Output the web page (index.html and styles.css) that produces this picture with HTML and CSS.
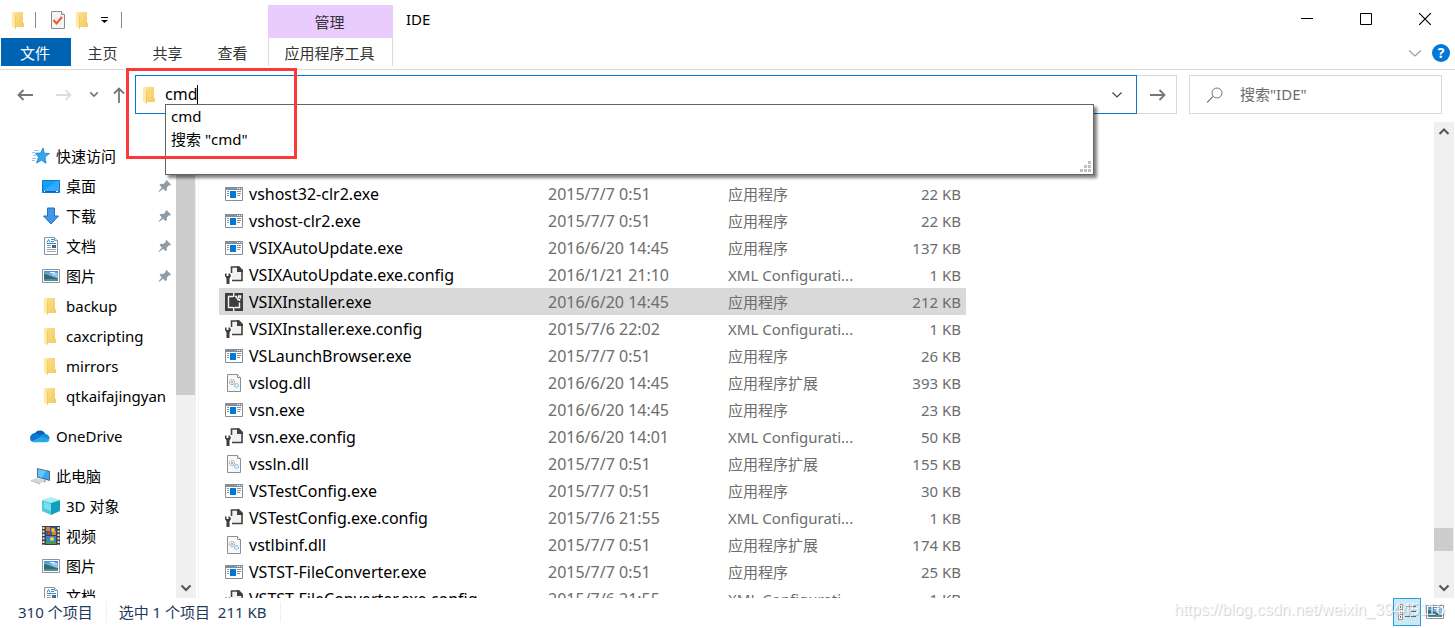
FILE: index.html
```html
<!DOCTYPE html>
<html lang="zh-CN">
<head>
    <meta charset="utf-8">
    <title>IDE</title>
    <meta name="viewport" content="width=device-width, initial-scale=1.0">
    <link rel="stylesheet" href="styles.css">
</head>
<body>
    <!-- icon set -->
    <svg class="sprite" aria-hidden="true">
        <defs>
            <linearGradient id="gFolder" x1="0" y1="0" x2="1" y2="1">
                <stop offset="0" stop-color="#fbe08d"/>
                <stop offset="1" stop-color="#f3cb61"/>
            </linearGradient>
            <linearGradient id="gSky" x1="0" y1="0" x2="0" y2="1">
                <stop offset="0" stop-color="#3f8fe0"/>
                <stop offset="1" stop-color="#d8ecf8"/>
            </linearGradient>
        </defs>
        <symbol id="folder" viewBox="0 0 18 18">
            <path d="M4 1h9v11h1v4H5z" fill="url(#gFolder)"/>
            <path d="M2 1h3l1 2v15l-4-2z" fill="#ffe9a8"/>
            <path d="M5 3l1 1v14l-1-1z" fill="#f3cb61"/>
        </symbol>
        <symbol id="check" viewBox="0 0 18 18">
            <path d="M2.500.5h10l3 3v14h-13z" fill="#f3f4f5" stroke="#8d8d8d"/>
            <path d="M12.500.5v3h3" fill="#fff" stroke="#8d8d8d"/>
            <path d="M4.500 9l3 3.500 5.500-6.500" fill="none" stroke="#f0561d" stroke-width="2"/>
        </symbol>
        <symbol id="star" viewBox="0 0 18 18">
            <path d="M11 1l1.200 5.200 5.300.3-4.500 3.600 1 6.200-4.500-3-5 2.700 2-5.800L3.500 6.300l5.100-.3z" fill="#35a6ee" stroke="#1b7fcb" stroke-width=".8"/>
            <path d="M2 3.500h5M0 5.500h3M1 8.500h3M0 11.500h4M0 13.500h3" stroke="#8ccaf3" stroke-width="1"/>
        </symbol>
        <symbol id="desktop" viewBox="0 0 18 18">
            <path d="M.5 3.500h17v12H.5z" fill="#13a0f8" stroke="#0d79c9"/>
            <path d="M1 14L15 4h2V14z" fill="#33abff"/>
            <path d="M1 14.500h16" stroke="#0a66b1"/>
            <path d="M14 14.500h2M2 14.500h1" stroke="#fff"/>
        </symbol>
        <symbol id="download" viewBox="0 0 18 18">
            <path d="M5.500 1h7v8h4L9 17 1.500 9h4z" fill="#3f97e6" stroke="#2374c0"/>
        </symbol>
        <symbol id="doc" viewBox="0 0 18 18">
            <path d="M2.500.5h10l3 3v14h-13z" fill="#fff" stroke="#8e979e"/>
            <path d="M12.500.5v3h3" fill="#e5e9ec" stroke="#8e979e"/>
            <path d="M5 5.500l1.500-3L8 5.500M9 2.500h3M9 4.500h3M5 6.500h9" stroke="#2e8fd6" fill="none"/>
            <path d="M5 8.500h4M5 10.500h4M5 12.500h9M5 14.500h9" stroke="#9aa4ab"/>
            <path d="M10 8h4v3h-4z" fill="#376c99"/>
        </symbol>
        <symbol id="picture" viewBox="0 0 18 18">
            <path d="M.5 2.500h17v13H.5z" fill="#fff" stroke="#929292"/>
            <path d="M2 4h14v10H2z" fill="url(#gSky)"/>
            <path d="M2 7c4 0 8 3 14 4v1H2z" fill="#356f62"/>
            <path d="M2 12h14v2H2z" fill="#4a8eae"/>
            <path d="M8 5.500h5M10 7h5" stroke="#f5fbff"/>
        </symbol>
        <symbol id="pin" viewBox="0 0 14 14">
            <path d="M8.500 1L13 5.500l-1 1-1-.2-2.300 2.400.3 2.300-1.300 1.300-2.600-2.600L1 13l-.5-.5 3.300-4L1.500 6l1.300-1.200 2.500.2L7.700 2.900l-.3-1z" fill="#8f9ba5"/>
        </symbol>
        <symbol id="cloud" viewBox="0 0 20 14">
            <path d="M5 4a6 6 0 0 1 10.500 1.500L11 10 1 8a4.500 4.500 0 0 1 4-4z" fill="#0364b8"/>
            <path d="M10 6l5-1a4.500 4.500 0 0 1 4.500 5L13 11z" fill="#1490df"/>
            <path d="M4.500 4.500C2 4.500 0 6.500 0 9c0 1.500.8 3 2 3.700L11.500 8 8 5.500a6 6 0 0 0-3.500-1z" fill="#0a78d4"/>
            <path d="M2 12.700L11 7.500l8.500 3c-.3 1.600-1.500 2.800-3.500 2.800H4.500c-1 0-1.800-.1-2.500-.6z" fill="#28a8ea"/>
        </symbol>
        <symbol id="pc" viewBox="0 0 20 18">
            <path d="M7 1l13 3v10L7 10.500z" fill="#4b6f8a"/>
            <path d="M8 2.200l11 2.600v7.800L8 9.700z" fill="#3aa5f0"/>
            <path d="M8 2.200l8 1.900-4 6.600L8 9.700z" fill="#6cc3fa"/>
            <path d="M13 12.200l3 .8-.5 2.500-5-1z" fill="#a9b2b9"/>
            <path d="M1 13l5-2 9 2.500-5 3z" fill="#d3d8dc"/>
            <path d="M1 13l9 3.500v1L1 14z" fill="#a9b2b9"/>
        </symbol>
        <symbol id="cube" viewBox="0 0 18 18">
            <path d="M0 3l9-3 9 3-9 3z" fill="#a5eef4"/>
            <path d="M0 3l9 3v12l-9-4z" fill="#50cbdc"/>
            <path d="M18 3L9 6v12l9-4z" fill="#13a0bf"/>
            <path d="M2 5l7 2.500V14L2 11z" fill="#7be0eb"/>
        </symbol>
        <symbol id="video" viewBox="0 0 18 20">
            <path d="M0 0h18v19H0z" fill="#414141"/>
            <path d="M1.500 1v18M16.500 1v18" stroke="#e4e4e4" stroke-width="2" stroke-dasharray="2 1.500"/>
            <path d="M4 1h10v8H4z" fill="#2e5da8"/>
            <path d="M4 10h10v8H4z" fill="#3a85cf"/>
            <path d="M4 1h4v4H4zM10 5h4v4h-4z" fill="#d9842c"/>
            <circle cx="11" cy="4" r="2" fill="#edc832"/>
            <circle cx="7" cy="7" r="1.500" fill="#cd3830"/>
            <circle cx="10" cy="13" r="2" fill="#f0d03b"/>
            <path d="M4 16h10v2H4z" fill="#4c9b48"/>
        </symbol>
        <symbol id="exe" viewBox="0 0 18 18">
            <path d="M.5 2.500h17v13H.5z" fill="#fff" stroke="#858e96"/>
            <path d="M0 2h18v3H0z" fill="#858e96"/>
            <path d="M12 3.500h1M14 3.500h1M16 3.500h1" stroke="#fff"/>
            <path d="M5 6h6v7H5z" fill="#0078d7"/>
            <path d="M2 6.500h2M2 8.500h2M2 10.500h2M12 6.500h4M12 8.500h4M12 10.500h3" stroke="#8b949b"/>
        </symbol>
        <symbol id="config" viewBox="0 0 18 18">
            <path d="M6.500 7V1H13l4 4v9.500H7" fill="#f2f2f2" stroke="#424242" stroke-width="1.600"/>
            <path d="M12 0h2l4 4v2h-6z" fill="#424242"/>
            <path d="M0 7.500h1.500V10h2V7.500H5l1 2.500-1.500 2.500V18h-3v-5.500L0 10z" fill="#3d3d3d"/>
        </symbol>
        <symbol id="dll" viewBox="0 0 18 18">
            <path d="M2.500.5h10l3 3v14h-13z" fill="#f8f8f8" stroke="#8e8e8e"/>
            <path d="M12.500.5v3h3" fill="#fff" stroke="#8e8e8e"/>
            <circle cx="7" cy="8" r="2.500" fill="#fff" stroke="#878787" stroke-dasharray="1.500 .6"/>
            <circle cx="7" cy="8" r="1" fill="#919191"/>
            <circle cx="11.500" cy="11.500" r="2" fill="#e0f1fa" stroke="#6ea4c6" stroke-dasharray="1.500 .6"/>
        </symbol>
        <symbol id="vsix" viewBox="0 0 18 18">
            <path d="M0 0h18v18H0z" fill="#3e3e40"/>
            <path d="M8 3.500H3.500v11H8M9.500 14.500h5V9.500M10 3.500h1.500v3h3V8" fill="none" stroke="#f4f4f4" stroke-width="1.400"/>
            <path d="M8.700 0v4M8.700 14v4M12 6l3-3M13 3h2.500v2.500" fill="none" stroke="#f4f4f4" stroke-width="1.400"/>
            <path d="M5.500 5.500h6.500v7H5.500z" fill="#3e3e40"/>
        </symbol>
        <symbol id="details" viewBox="0 0 18 16">
            <path d="M.5.5h4v15h-4zM.5 5.500h4M.5 10.500h4" fill="#fff" stroke="#959595"/>
            <path d="M2 2h1v2H2z" fill="#4f78b8"/>
            <path d="M2 7h1v2H2z" fill="#5e9648"/>
            <path d="M2 12h1v2H2z" fill="#c6452b"/>
            <path d="M7 2.500h5M13 2.500h5M7 7.500h5M13 7.500h5M7 12.500h5M13 12.500h5" stroke="#626a70"/>
        </symbol>
        <symbol id="left" viewBox="0 0 16 12">
            <path d="M16 6H1.500M6.500 1l-5 5 5 5" fill="none" stroke="currentColor" stroke-width="1.800"/>
        </symbol>
        <symbol id="right" viewBox="0 0 16 12">
            <path d="M0 6h14.500M9.500 1l5 5-5 5" fill="none" stroke="currentColor" stroke-width="1.800"/>
        </symbol>
        <symbol id="up" viewBox="0 0 12 16">
            <path d="M6 16V1.500M1 6.500l5-5 5 5" fill="none" stroke="currentColor" stroke-width="1.800"/>
        </symbol>
        <symbol id="chevron" viewBox="0 0 12 8">
            <path d="M1.500 1.500L6 6l4.500-4.500" fill="none" stroke="currentColor" stroke-width="1.200"/>
        </symbol>
        <symbol id="chevronUp" viewBox="0 0 12 8">
            <path d="M1.500 6L6 1.500 10.500 6" fill="none" stroke="currentColor" stroke-width="2"/>
        </symbol>
        <symbol id="chevronDown" viewBox="0 0 12 8">
            <path d="M1.500 1.500L6 6l4.500-4.500" fill="none" stroke="currentColor" stroke-width="2"/>
        </symbol>
    </svg>

    <header class="titlebar">
        <div class="quick">
            <svg class="icon"><use href="#folder"/></svg>
            <span class="sep"></span>
            <button class="plain" aria-label="属性"><svg class="icon"><use href="#check"/></svg></button>
            <button class="plain" aria-label="新建文件夹"><svg class="icon"><use href="#folder"/></svg></button>
            <button class="plain more" aria-label="自定义快速访问工具栏"><svg width="7" height="6"><path d="M0 .5h7" stroke="#000"/><path d="M0 3h7L3.500 6z"/></svg></button>
            <span class="sep"></span>
        </div>
        <div class="context-title">管理</div>
        <div class="window-title">IDE</div>
        <div class="window-buttons">
            <button class="plain" aria-label="最小化"><svg width="12" height="12"><path d="M0 5.500h12" stroke="#000"/></svg></button>
            <button class="plain" aria-label="最大化"><svg width="12" height="12"><path d="M.5.5h11v11H.5z" fill="none" stroke="#000"/></svg></button>
            <button class="plain" aria-label="关闭"><svg width="12" height="12"><path d="M0 0l12 12M12 0L0 12" stroke="#000" stroke-width="1.200"/></svg></button>
        </div>
    </header>

    <nav class="tabs">
        <button class="tab file">文件</button>
        <button class="tab">主页</button>
        <button class="tab">共享</button>
        <button class="tab">查看</button>
        <button class="tab context">应用程序工具</button>
        <div class="ribbon-right">
            <button class="plain" aria-label="展开功能区"><svg class="wide-chevron" viewBox="0 0 12 7"><path d="M0 .5l6 5.500 6-5.500" fill="none" stroke="#9a9a9a" stroke-width="1.200"/></svg></button>
            <button class="help" aria-label="帮助">?</button>
        </div>
    </nav>

    <div class="address-row">
        <div class="nav-buttons">
            <button class="plain" aria-label="后退"><svg width="16" height="12"><use href="#left"/></svg></button>
            <button class="plain disabled" aria-label="前进" disabled><svg width="16" height="12"><use href="#right"/></svg></button>
            <button class="plain recent" aria-label="最近浏览的位置"><svg width="10" height="7"><use href="#chevronDown"/></svg></button>
            <button class="plain" aria-label="上移"><svg width="12" height="16"><use href="#up"/></svg></button>
        </div>
        <div class="address">
            <svg class="icon"><use href="#folder"/></svg>
            <input class="address-input" type="text" size="3" value="cmd" aria-label="地址">
            <span class="caret"></span>
            <button class="plain history" aria-label="以前的位置"><svg width="12" height="8"><use href="#chevron"/></svg></button>
            <div class="suggest">
                <ul>
                    <li>cmd</li>
                    <li>搜索 "cmd"</li>
                </ul>
                <svg class="grip" width="11" height="11"><path d="M8 0h3v3H8zM4 4h3v3H4zM8 4h3v3H8zM0 8h3v3H0zM4 8h3v3H4zM8 8h3v3H8z" fill="#c0c0c0"/></svg>
            </div>
            <div class="highlight"></div>
        </div>
        <button class="go" aria-label="转到"><svg width="16" height="12"><use href="#right"/></svg></button>
        <label class="search">
            <svg width="16" height="16"><path d="M0 15.500l6-6" stroke="#777" stroke-width="1.200"/><circle cx="10" cy="6" r="5" fill="none" stroke="#777"/></svg>
            <input type="search" placeholder='搜索"IDE"' aria-label="搜索">
        </label>
    </div>

    <main class="content">
        <aside class="sidebar">
            <ul class="tree">
                <li class="root"><svg class="icon"><use href="#star"/></svg>快速访问</li>
                <li><svg class="icon"><use href="#desktop"/></svg>桌面<svg class="pin"><use href="#pin"/></svg></li>
                <li><svg class="icon"><use href="#download"/></svg>下载<svg class="pin"><use href="#pin"/></svg></li>
                <li><svg class="icon"><use href="#doc"/></svg>文档<svg class="pin"><use href="#pin"/></svg></li>
                <li><svg class="icon"><use href="#picture"/></svg>图片<svg class="pin"><use href="#pin"/></svg></li>
                <li><svg class="icon"><use href="#folder"/></svg>backup</li>
                <li><svg class="icon"><use href="#folder"/></svg>caxcripting</li>
                <li><svg class="icon"><use href="#folder"/></svg>mirrors</li>
                <li><svg class="icon"><use href="#folder"/></svg>qtkaifajingyan</li>
                <li class="root group"><svg class="icon big"><use href="#cloud"/></svg>OneDrive</li>
                <li class="root group"><svg class="icon big"><use href="#pc"/></svg>此电脑</li>
                <li><svg class="icon"><use href="#cube"/></svg>3D 对象</li>
                <li><svg class="icon film"><use href="#video"/></svg>视频</li>
                <li><svg class="icon"><use href="#picture"/></svg>图片</li>
                <li><svg class="icon"><use href="#doc"/></svg>文档</li>
            </ul>
            <div class="scrollbar side-scroll">
                <svg width="12" height="8"><use href="#chevronUp"/></svg>
                <div class="track"><div class="thumb"></div></div>
                <svg width="12" height="8"><use href="#chevronDown"/></svg>
            </div>
        </aside>

        <section class="files">
            <table>
                <tbody>
                    <tr><td class="name"><svg class="icon"><use href="#exe"/></svg>vshost32-clr2.exe</td><td class="date">2015/7/7 0:51</td><td class="type">应用程序</td><td class="size">22 KB</td></tr>
                    <tr><td class="name"><svg class="icon"><use href="#exe"/></svg>vshost-clr2.exe</td><td class="date">2015/7/7 0:51</td><td class="type">应用程序</td><td class="size">22 KB</td></tr>
                    <tr><td class="name"><svg class="icon"><use href="#exe"/></svg>VSIXAutoUpdate.exe</td><td class="date">2016/6/20 14:45</td><td class="type">应用程序</td><td class="size">137 KB</td></tr>
                    <tr><td class="name"><svg class="icon"><use href="#config"/></svg>VSIXAutoUpdate.exe.config</td><td class="date">2016/1/21 21:10</td><td class="type">XML Configurati...</td><td class="size">1 KB</td></tr>
                    <tr class="selected"><td class="name"><svg class="icon"><use href="#vsix"/></svg>VSIXInstaller.exe</td><td class="date">2016/6/20 14:45</td><td class="type">应用程序</td><td class="size">212 KB</td></tr>
                    <tr><td class="name"><svg class="icon"><use href="#config"/></svg>VSIXInstaller.exe.config</td><td class="date">2015/7/6 22:02</td><td class="type">XML Configurati...</td><td class="size">1 KB</td></tr>
                    <tr><td class="name"><svg class="icon"><use href="#exe"/></svg>VSLaunchBrowser.exe</td><td class="date">2015/7/7 0:51</td><td class="type">应用程序</td><td class="size">26 KB</td></tr>
                    <tr><td class="name"><svg class="icon"><use href="#dll"/></svg>vslog.dll</td><td class="date">2016/6/20 14:45</td><td class="type">应用程序扩展</td><td class="size">393 KB</td></tr>
                    <tr><td class="name"><svg class="icon"><use href="#exe"/></svg>vsn.exe</td><td class="date">2016/6/20 14:45</td><td class="type">应用程序</td><td class="size">23 KB</td></tr>
                    <tr><td class="name"><svg class="icon"><use href="#config"/></svg>vsn.exe.config</td><td class="date">2016/6/20 14:01</td><td class="type">XML Configurati...</td><td class="size">50 KB</td></tr>
                    <tr><td class="name"><svg class="icon"><use href="#dll"/></svg>vssln.dll</td><td class="date">2015/7/7 0:51</td><td class="type">应用程序扩展</td><td class="size">155 KB</td></tr>
                    <tr><td class="name"><svg class="icon"><use href="#exe"/></svg>VSTestConfig.exe</td><td class="date">2015/7/7 0:51</td><td class="type">应用程序</td><td class="size">30 KB</td></tr>
                    <tr><td class="name"><svg class="icon"><use href="#config"/></svg>VSTestConfig.exe.config</td><td class="date">2015/7/6 21:55</td><td class="type">XML Configurati...</td><td class="size">1 KB</td></tr>
                    <tr><td class="name"><svg class="icon"><use href="#dll"/></svg>vstlbinf.dll</td><td class="date">2015/7/7 0:51</td><td class="type">应用程序扩展</td><td class="size">174 KB</td></tr>
                    <tr><td class="name"><svg class="icon"><use href="#exe"/></svg>VSTST-FileConverter.exe</td><td class="date">2015/7/7 0:51</td><td class="type">应用程序</td><td class="size">25 KB</td></tr>
                    <tr><td class="name"><svg class="icon"><use href="#config"/></svg>VSTST-FileConverter.exe.config</td><td class="date">2015/7/6 21:55</td><td class="type">XML Configurati...</td><td class="size">1 KB</td></tr>
                </tbody>
            </table>
        </section>

        <div class="scrollbar main-scroll">
            <svg width="12" height="8"><use href="#chevronUp"/></svg>
            <div class="track"><div class="thumb"></div></div>
            <svg width="12" height="8"><use href="#chevronDown"/></svg>
        </div>
    </main>

    <footer class="status">
        <span class="count">310 个项目</span>
        <span class="chosen">选中 1 个项目&nbsp; 211 KB</span>
        <div class="views">
            <button class="view active" aria-label="详细信息"><svg width="18" height="16"><use href="#details"/></svg></button>
            <button class="view" aria-label="大图标"><svg class="icon"><use href="#picture"/></svg></button>
        </div>
        <div class="watermark">https://blog.csdn.net/weixin_39445116</div>
    </footer>
</body>
</html>
```
FILE: styles.css
```css
* {
    box-sizing: border-box;
}
body {
    margin: 0;
    height: 100vh;
    display: flex;
    flex-direction: column;
    overflow: hidden;
    background: #fff;
    color: #000;
    font-family: "Noto Sans", "Noto Sans CJK SC", sans-serif;
    font-size: 15px;
    line-height: 20px;
}
button, input {
    font: inherit;
    color: inherit;
}
ul {
    list-style: none;
    margin: 0;
    padding: 0;
}
svg {
    display: block;
    flex: none;
}
.sprite {
    position: absolute;
    width: 0;
    height: 0;
}
.icon {
    width: 18px;
    height: 18px;
}
.plain {
    display: flex;
    align-items: center;
    justify-content: center;
    padding: 0;
    border: 0;
    background: none;
}

/* title bar */
.titlebar {
    display: flex;
    height: 38px;
    flex: none;
}
.quick {
    display: flex;
    align-items: center;
    width: 268px;
    padding: 2px 0 0 10px;
}
.quick .sep {
    width: 1px;
    height: 16px;
    background: #8a8a8a;
    margin: 0 13px 0 7px;
}
.quick .plain {
    margin-right: 7px;
}
.quick .more {
    margin: 0 6px 0 2px;
}
.context-title {
    width: 125px;
    margin-top: 5px;
    padding-right: 2px;
    line-height: 34px;
    text-align: center;
    background: #eacbfd;
    color: #333;
}
.window-title {
    flex: 1;
    padding-left: 13px;
    line-height: 38px;
}
.window-buttons {
    display: flex;
}
.window-buttons .plain {
    width: 59px;
}
.window-buttons .plain:last-child {
    width: 60px;
}

/* ribbon tabs */
.tabs {
    display: flex;
    align-items: flex-start;
    height: 32px;
    flex: none;
    padding-left: 1px;
    border-bottom: 1px solid #dadbdc;
}
.tab {
    width: 65px;
    height: 28px;
    padding: 2px 2px 0 0;
    border: 0;
    background: none;
    color: #333;
}
.tab.file {
    width: 70px;
    background: #0063b1;
    color: #fff;
}
.tab.context {
    width: 125px;
    margin-left: 2px;
    border: solid #dadbdc;
    border-width: 0 1px;
}
.ribbon-right {
    display: flex;
    align-items: center;
    gap: 11px;
    height: 30px;
    margin-left: auto;
    padding-right: 5px;
}
.wide-chevron {
    width: 12px;
    height: 7px;
}
.help {
    width: 18px;
    height: 18px;
    padding: 0;
    border: 0;
    border-radius: 50%;
    background: #0078d7;
    color: #fff;
    font-size: 14px;
    font-weight: bold;
    line-height: 18px;
}

/* address row */
.address-row {
    display: flex;
    flex: none;
    height: 52px;
    padding: 5px 13px 8px 0;
}
.nav-buttons {
    display: flex;
    align-items: center;
    width: 135px;
    padding-left: 17px;
    color: #767676;
}
.nav-buttons .plain {
    margin-right: 23px;
}
.nav-buttons .disabled {
    margin-right: 17px;
    color: #dcdcdc;
}
.nav-buttons .recent {
    margin-right: 14px;
}
.address {
    position: relative;
    display: flex;
    align-items: center;
    flex: 1;
    border: 1px solid #0078d7;
    padding-left: 5px;
}
.address-input {
    field-sizing: content;
    margin-left: 6px;
    padding: 0 0 2px;
    border: 0;
    outline: 0;
    background: none;
    font-size: 16px;
}
.caret {
    width: 1px;
    height: 20px;
    background: #000;
}
.history {
    width: 38px;
    margin-left: auto;
    color: #444;
}
.suggest {
    position: absolute;
    top: 28px;
    left: 29px;
    right: 42px;
    z-index: 2;
    height: 71px;
    border: 1px solid #646464;
    background: #fff;
    box-shadow: 3px 3px 3px rgba(0, 0, 0, 0.5);
}
.suggest li {
    padding-left: 5px;
    line-height: 23px;
}
.grip {
    position: absolute;
    right: 2px;
    bottom: 2px;
}
/* red frame over the typed text and its suggestions */
.highlight {
    position: absolute;
    top: -8px;
    left: -10px;
    z-index: 3;
    width: 171px;
    height: 91px;
    border: 3px solid #fb3939;
    pointer-events: none;
}
.go {
    display: flex;
    align-items: center;
    justify-content: center;
    width: 40px;
    padding: 0 0 0 2px;
    border: 1px solid #d9d9d9;
    border-left: 0;
    background: #fff;
    color: #767676;
}
.search {
    display: flex;
    align-items: center;
    width: 253px;
    margin-left: 12px;
    padding-left: 17px;
    border: 1px solid #d9d9d9;
}
.search input {
    flex: 1;
    min-width: 0;
    margin-left: 17px;
    padding: 0 0 2px;
    border: 0;
    outline: 0;
    background: none;
}
.search input::placeholder {
    color: #6d6d6d;
    opacity: 1;
}

/* main area */
.content {
    display: flex;
    flex: 1;
    min-height: 0;
    overflow: hidden;
}
.sidebar {
    display: flex;
    width: 199px;
    padding-right: 2px;
    border-right: 1px solid #f3f3f3;
    overflow: hidden;
}
.tree {
    flex: 1;
    min-width: 0;
    padding-top: 19px;
}
.tree li {
    display: flex;
    align-items: center;
    height: 30px;
    padding-left: 42px;
    white-space: nowrap;
}
.tree .icon {
    margin-right: 6px;
}
.tree .root {
    padding-left: 32px;
}
.tree .group {
    margin-top: 10px;
    padding-left: 30px;
}
.tree .big {
    width: 20px;
}
.tree .film {
    height: 20px;
}
.pin {
    width: 14px;
    height: 14px;
    margin-left: auto;
    margin-right: 4px;
}
.scrollbar {
    display: flex;
    flex-direction: column;
    align-items: center;
    flex: none;
    width: 20px;
    padding: 6px 0;
    background: #f0f0f0;
    color: #555;
}
.track {
    flex: 1;
    align-self: stretch;
    display: flex;
    flex-direction: column;
    margin: 6px 1px 6px 0;
}
.thumb {
    background: #cdcdcd;
}
.side-scroll .thumb {
    height: 58%;
}
.main-scroll {
    margin-right: 1px;
}
.main-scroll .track {
    justify-content: flex-end;
    padding-bottom: 27px;
}
.main-scroll .thumb {
    height: 23px;
}

/* file list */
.files {
    flex: 1;
    min-width: 0;
    padding: 58px 0 0 20px;
    overflow: hidden;
}
table {
    width: 747px;
    border-collapse: collapse;
    table-layout: fixed;
}
tr {
    height: 27px;
}
td {
    padding: 0;
    color: #6d6d6d;
    white-space: nowrap;
}
.name {
    width: 329px;
    padding-left: 6px;
    color: #000;
    font-size: 16px;
}
.name .icon {
    display: inline-block;
    margin-right: 6px;
    vertical-align: -3px;
}
.date {
    width: 180px;
    font-size: 16px;
}
.type {
    width: 138px;
}
.size {
    padding-right: 5px;
    text-align: right;
}
.selected {
    background: #d9d9d9;
}

/* status bar */
.status {
    position: relative;
    display: flex;
    align-items: center;
    flex: none;
    height: 30px;
    padding: 0 0 2px 18px;
    color: #1e395b;
}
.count, .chosen {
    padding-right: 13px;
    border-right: 1px solid #f0f0f0;
}
.chosen {
    padding-left: 12px;
}
.views {
    display: flex;
    align-items: center;
    margin-left: auto;
    padding-right: 6px;
}
.view {
    display: flex;
    align-items: center;
    justify-content: center;
    width: 28px;
    height: 28px;
    padding: 0;
    border: 0;
    background: none;
}
.view.active {
    border: 1px solid #26a0da;
    background: #cbe8f6;
}
.watermark {
    position: absolute;
    right: 10px;
    bottom: 8px;
    color: rgba(255, 255, 255, 0.8);
    font-family: "Liberation Sans", Arial, sans-serif;
    font-size: 16px;
    text-shadow: 1px 1px 1px rgba(0, 0, 0, 0.2);
    pointer-events: none;
}
```
